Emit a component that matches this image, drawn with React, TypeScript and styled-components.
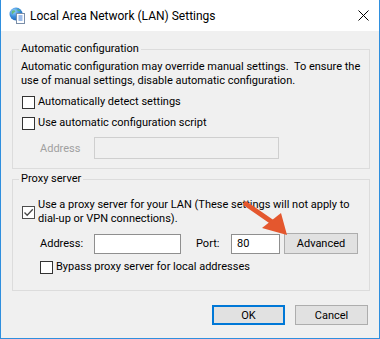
import React from 'react';
import styled, { createGlobalStyle } from 'styled-components';

const Global = createGlobalStyle`
  html, body { margin: 0; padding: 0; background: #fff; }
  body {
    font-family: Roboto, "Noto Sans", sans-serif;
    font-size: 11px;
    color: #000;
  }
  * { box-sizing: border-box; }
`;

const Window = styled.div`
  position: relative;
  width: 380px;
  height: 339px;
  overflow: hidden;
  border: 1px solid #2f8fde;
  border-top: none;
  background: #f0f0f0;
  display: flex;
  flex-direction: column;
`;

const TitleBar = styled.div`
  height: 31px;
  flex-shrink: 0;
  background: #fff;
  display: flex;
  align-items: center;
  gap: 5px;
  padding: 0 10px 0 8px;
`;

const Title = styled.div`
  flex: 1;
  font-size: 12px;
  line-height: 16px;
  color: #000;
  white-space: nowrap;
`;

const Body = styled.div`
  flex: 1;
  display: flex;
  flex-direction: column;
  padding: 10px 9px 0 11px;
`;

const Group = styled.fieldset<{ $gapTop?: number }>`
  margin: ${(p) => p.$gapTop ?? 0}px 0 0 0;
  padding: 0 8px;
  border: 1px solid #dcdcdc;
  min-width: 0;
`;

const Legend = styled.legend`
  padding: 0 2px;
  margin-left: -2px;
  font-size: 11px;
  line-height: 16px;
`;

const GroupContent = styled.div<{ $top: number; $bottom: number }>`
  display: flex;
  flex-direction: column;
  gap: 7px;
  padding-top: ${(p) => p.$top}px;
  padding-bottom: ${(p) => p.$bottom}px;
`;

const Paragraph = styled.div`
  line-height: 14px;
  white-space: nowrap;
`;

const CheckRow = styled.label<{ $indent?: number; $mt?: number }>`
  display: flex;
  align-items: center;
  gap: 3px;
  margin-left: ${(p) => p.$indent ?? 1}px;
  margin-top: ${(p) => p.$mt ?? 0}px;
  line-height: 14px;
  white-space: nowrap;
`;

const Box = styled.span<{ $checked?: boolean }>`
  width: 13px;
  height: 13px;
  flex-shrink: 0;
  border: 1px solid ${(p) => (p.$checked ? '#4d4d4d' : '#333')};
  background: #fff;
  display: flex;
  align-items: center;
  justify-content: center;
`;

const FieldRow = styled.div<{ $indent?: number; $height: number }>`
  display: flex;
  align-items: center;
  margin-left: ${(p) => p.$indent ?? 0}px;
  height: ${(p) => p.$height}px;
`;

const FieldLabel = styled.span<{ $width: number; $disabled?: boolean }>`
  width: ${(p) => p.$width}px;
  flex-shrink: 0;
  color: ${(p) => (p.$disabled ? '#a0a0a0' : '#000')};
  white-space: nowrap;
`;

const TextBox = styled.div<{ $width: number; $height: number; $disabled?: boolean }>`
  width: ${(p) => p.$width}px;
  height: ${(p) => p.$height}px;
  flex-shrink: 0;
  border: 1px solid ${(p) => (p.$disabled ? '#cfcfcf' : '#8f8f8f')};
  background: ${(p) => (p.$disabled ? '#f0f0f0' : '#fff')};
  padding: 0 5px;
  display: flex;
  align-items: center;
`;

const Gap = styled.span<{ $w: number }>`
  width: ${(p) => p.$w}px;
  flex-shrink: 0;
`;

const Button = styled.button<{ $width: number; $height: number; $primary?: boolean }>`
  width: ${(p) => p.$width}px;
  height: ${(p) => p.$height}px;
  flex-shrink: 0;
  font-family: inherit;
  font-size: 11px;
  color: #000;
  background: #e1e1e1;
  border: ${(p) => (p.$primary ? '2px solid #0078d7' : '1px solid #adadad')};
  padding: 0;
  display: flex;
  align-items: center;
  justify-content: center;
`;

const Footer = styled.div`
  display: flex;
  justify-content: flex-end;
  gap: 10px;
  margin-top: 14px;
  padding-right: 2px;
`;

const Overlay = styled.svg`
  position: absolute;
  left: -1px;
  top: 0;
  pointer-events: none;
`;

const CloseIcon = () => (
  <svg width="11" height="11" viewBox="0 0 11 11">
    <path d="M0.5 0.5 L10.5 10.5 M10.5 0.5 L0.5 10.5" stroke="#000" strokeWidth="1" />
  </svg>
);

const NetIcon = () => (
  <svg width="16" height="17" viewBox="0 0 16 17">
    <defs>
      <radialGradient id="g" cx="0.35" cy="0.3" r="0.8">
        <stop offset="0" stopColor="#9fd4ff" />
        <stop offset="0.5" stopColor="#3b8fdc" />
        <stop offset="1" stopColor="#1a5fae" />
      </radialGradient>
    </defs>
    <circle cx="7" cy="7" r="6.5" fill="url(#g)" />
    <path d="M3 4 C4 3 6 3 6.5 4.5 C5.5 5.5 4 6 3.5 7.5 C2.5 6.5 2.5 5 3 4 Z" fill="#5fb86a" opacity="0.85" />
    <path d="M8 2 C9.5 2 11 3 11.5 4.5 C10.5 4.5 9.5 4 8.5 3.5 Z" fill="#5fb86a" opacity="0.85" />
    <rect x="7.5" y="6.5" width="8" height="10" fill="#fff" stroke="#7a8ea8" strokeWidth="1" />
    <path d="M9.5 9 H13.5 M9.5 11 H13.5 M9.5 13 H13.5" stroke="#3a7bd5" strokeWidth="1" />
  </svg>
);

const Check = () => (
  <svg width="11" height="11" viewBox="0 0 11 11">
    <path d="M1.5 5.5 L4.2 8.3 L9.8 2.2" stroke="#4a4a4a" strokeWidth="1.3" fill="none" />
  </svg>
);

export default function App() {
  return (
    <>
      <Global />
      <Window>
        <TitleBar>
          <NetIcon />
          <Title>Local Area Network (LAN) Settings</Title>
          <CloseIcon />
        </TitleBar>
        <Body>
          <Group>
            <Legend>Automatic configuration</Legend>
            <GroupContent $top={3} $bottom={9}>
              <Paragraph>
                Automatic configuration may override manual settings.&nbsp; To ensure the
                <br />
                use of manual settings, disable automatic configuration.
              </Paragraph>
              <CheckRow>
                <Box />
                Automatically detect settings
              </CheckRow>
              <CheckRow>
                <Box />
                Use automatic configuration script
              </CheckRow>
              <FieldRow $indent={19} $height={22}>
                <FieldLabel $width={54} $disabled>Address</FieldLabel>
                <TextBox $width={185} $height={22} $disabled />
              </FieldRow>
            </GroupContent>
          </Group>
          <Group $gapTop={2}>
            <Legend>Proxy server</Legend>
            <GroupContent $top={11} $bottom={16}>
              <CheckRow>
                <Box $checked>
                  <Check />
                </Box>
                <span>
                  Use a proxy server for your LAN (These settings will not apply to
                  <br />
                  dial-up or VPN connections).
                </span>
              </CheckRow>
              <FieldRow $indent={19} $height={21}>
                <FieldLabel $width={54}>Address:</FieldLabel>
                <TextBox $width={87} $height={20} />
                <Gap $w={15} />
                <FieldLabel $width={35}>Port:</FieldLabel>
                <TextBox $width={49} $height={20}>80</TextBox>
                <Gap $w={4} />
                <Button $width={74} $height={21}>Advanced</Button>
              </FieldRow>
              <CheckRow $indent={19} $mt={-1}>
                <Box />
                Bypass proxy server for local addresses
              </CheckRow>
            </GroupContent>
          </Group>
          <Footer>
            <Button $width={73} $height={20} $primary>OK</Button>
            <Button $width={73} $height={20}>Cancel</Button>
          </Footer>
        </Body>
        <Overlay width="380" height="339" viewBox="0 0 380 339">
          <path d="M246 204 L272 222" stroke="#e4572e" strokeWidth="5" strokeLinecap="round" />
          <polygon points="287,235 262,228 281,213" fill="#e4572e" />
        </Overlay>
      </Window>
    </>
  );
}
